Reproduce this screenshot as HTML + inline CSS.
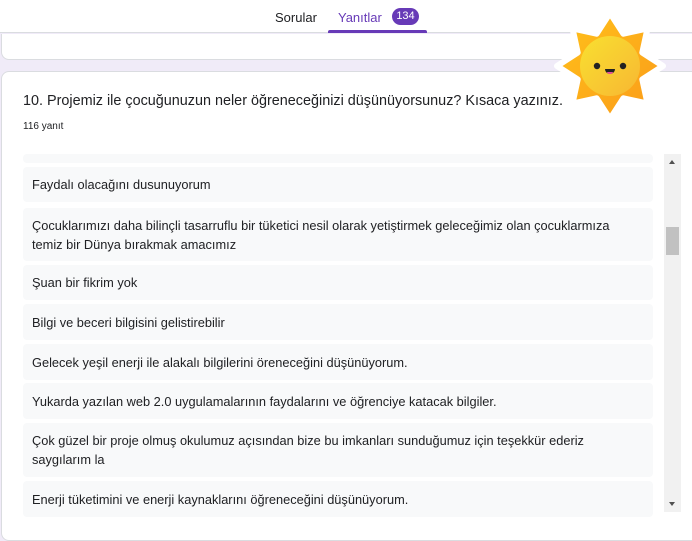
<!DOCTYPE html>
<html><head><meta charset="utf-8"><style>
*{box-sizing:border-box;margin:0;padding:0}
body{width:692px;height:522px;overflow:hidden;background:#f0ebf8;font-family:"Liberation Sans",Arial,sans-serif;position:relative;color:#202124}
.hdr{position:absolute;left:0;top:0;width:692px;height:33px;background:#fff;border-bottom:1px solid #dadce0}
.tab{position:absolute;top:10px;font-size:13px}
.ul{position:absolute;left:328px;top:30px;width:99px;height:3px;background:#673ab7;border-radius:2px 2px 0 0}
.badge{position:absolute;left:392px;top:8px;width:27px;height:17px;border-radius:9px;background:#673ab7;color:#fff;font-size:11px;text-align:center;line-height:17px}
.c1{position:absolute;left:1px;top:34px;width:700px;height:26px;background:#fff;border-radius:0 0 8px 8px;border:1px solid #dadce0;border-top:none}
.c2{position:absolute;left:1px;top:71px;width:700px;height:470px;background:#fff;border-radius:8px;border:1px solid #dadce0}
.q{position:absolute;left:23px;top:93px;font-size:14.4px;color:#202124}
.n{position:absolute;left:23px;top:121px;font-size:10px}
.it{position:absolute;left:23px;width:630px;background:#f8f9fa;border-radius:4px;font-size:12.8px;padding:0 26px 0 9px;line-height:19px;display:flex;align-items:center;color:#202124}
.sb{position:absolute;left:664px;top:154px;width:17px;height:358px;background:#f1f1f1}
.th{position:absolute;left:666px;top:227px;width:13px;height:28px;background:#c1c1c1}
</style></head><body>
<div class="hdr">
<div class="tab" style="left:275px">Sorular</div>
<div class="tab" style="left:338px;color:#673ab7">Yanıtlar</div>
<div class="badge">134</div>
<div class="ul"></div>
</div>
<div class="c1"></div>
<div class="c2"></div>
<div class="q">10. Projemiz ile çocuğunuzun neler öğreneceğinizi düşünüyorsunuz? Kısaca yazınız.</div>
<div class="n">116 yanıt</div>
<div class="it" style="top:154px;height:9px"></div>
<div class="it" style="top:167px;height:35px">Faydalı olacağını dusunuyorum</div>
<div class="it" style="top:208px;height:53px">Çocuklarımızı daha bilinçli tasarruflu bir tüketici nesil olarak yetiştirmek geleceğimiz olan çocuklarmıza temiz bir Dünya bırakmak amacımız</div>
<div class="it" style="top:265px;height:35px">Şuan bir fikrim yok</div>
<div class="it" style="top:304px;height:36px">Bilgi ve beceri bilgisini gelistirebilir</div>
<div class="it" style="top:344px;height:36px">Gelecek yeşil enerji ile alakalı bilgilerini öreneceğini düşünüyorum.</div>
<div class="it" style="top:383px;height:36px">Yukarda yazılan web 2.0 uygulamalarının faydalarını ve öğrenciye katacak bilgiler.</div>
<div class="it" style="top:423px;height:54px">Çok güzel bir proje olmuş okulumuz açısından bize bu imkanları sunduğumuz için teşekkür ederiz saygılarım la</div>
<div class="it" style="top:481px;height:36px">Enerji tüketimini ve enerji kaynaklarını öğreneceğini düşünüyorum.</div>
<div class="sb"><div style="position:absolute;left:5px;top:6px;border:3.5px solid transparent;border-bottom:4px solid #505050;border-top:none"></div><div style="position:absolute;left:5px;bottom:6px;border:3.5px solid transparent;border-top:4px solid #505050;border-bottom:none"></div></div>
<div class="th"></div>
<svg style="position:absolute;left:550px;top:6px" width="120" height="120" viewBox="-60 -60 120 120">
<defs><linearGradient id="g" x1="0" y1="0" x2="1" y2="1"><stop offset="0" stop-color="#ffc21a"/><stop offset="1" stop-color="#fb9a1a"/></linearGradient>
<linearGradient id="f" x1="0" y1="0" x2="1" y2="1"><stop offset="0" stop-color="#f9e030"/><stop offset="1" stop-color="#f7b733"/></linearGradient></defs>
<polygon points="0,-53 13.4,-32.3 37.5,-37.5 32.3,-13.4 53,0 32.3,13.4 37.5,37.5 13.4,32.3 0,53 -13.4,32.3 -37.5,37.5 -32.3,13.4 -53,0 -32.3,-13.4 -37.5,-37.5 -13.4,-32.3" fill="url(#g)" stroke="#fff" stroke-width="6" stroke-linejoin="round"/>
<circle r="30" fill="url(#f)"/>
<circle cx="-13" cy="0" r="3.2" fill="#222"/><circle cx="13" cy="0" r="3.2" fill="#222"/>
<path d="M-5,3 h10 a5,5 0 0 1 -10,0z" fill="#222"/><path d="M-3,6 h6 a3,2 0 0 1 -6,0z" fill="#e8509a"/>
</svg>
</body></html>
